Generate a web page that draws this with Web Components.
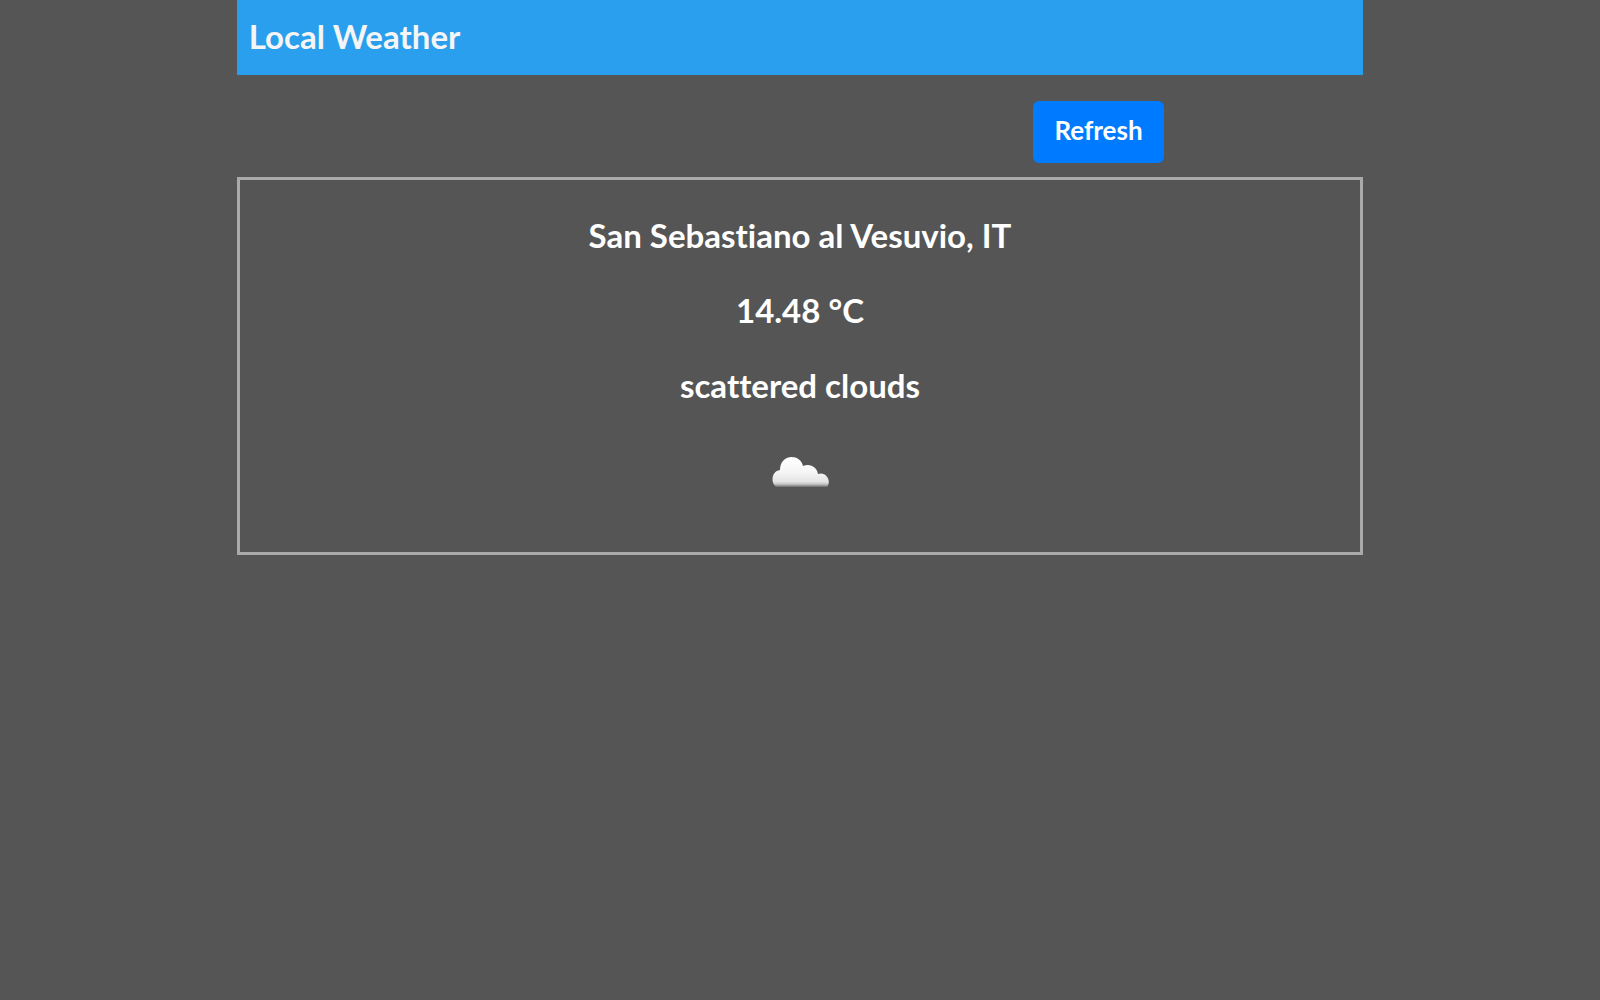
<!DOCTYPE html>
<html lang="en">
<head>
<meta charset="utf-8">
<meta name="viewport" content="width=device-width, initial-scale=1">
<title>Local Weather</title>
<style>
body { margin: 0; background: #555; color: #fff; font-family: "Trebuchet MS", Lato, sans-serif; font-size: 33px; font-weight: 700; line-height: 35px; font-variant-ligatures: none; }
</style>
</head>
<body>
<weather-app></weather-app>
<script>
const define = (name, html) => customElements.define(name, class extends HTMLElement {
  constructor() {
    super();
    this.attachShadow({ mode: "open" }).innerHTML = html;
  }
});

define("app-header", `
<style>
:host { display: block; background: #2a9fed; color: #f5f5f5; padding: 19px 12px 21px; }
h1 { margin: 0; font: inherit; font-variant-ligatures: none; }
</style>
<h1><slot></slot></h1>`);

define("refresh-button", `
<style>
:host { display: block; }
button { display: block; padding: 14px 21px 18px; border: 0; border-radius: 6px; background: #007bff; color: #fff; font: inherit; font-size: 26px; line-height: 30px; cursor: pointer; }
</style>
<button type="button"><slot></slot></button>`);

define("cloud-icon", `
<style>
:host { display: block; }
svg { display: block; width: 80px; height: 80px; }
</style>
<svg viewBox="0 0 80 80" role="img" aria-label="Cloud">
<defs>
<linearGradient id="shade" x1="0" y1="25" x2="0" y2="55" gradientUnits="userSpaceOnUse">
<stop offset="0" stop-color="#fff"/><stop offset=".45" stop-color="#f5f5f5"/><stop offset=".75" stop-color="#e4e4e4"/><stop offset=".84" stop-color="#c4c4c4"/><stop offset=".92" stop-color="#777"/><stop offset="1" stop-color="#555"/>
</linearGradient>
<filter id="soft"><feGaussianBlur stdDeviation=".7"/></filter>
</defs>
<path fill="url(#shade)" filter="url(#soft)" d="M16 53C10 48 12 37 20 36C20 20 40 19 43 32C50 29 57 33 58 40C66 37 72 47 67 53Z"/>
</svg>`);

define("weather-card", `
<style>
:host { display: flex; flex-direction: column; align-items: center; gap: 40px; padding: 38px 16px; border: 3px solid #aaa; text-align: center; }
p { margin: 0; }
cloud-icon { margin-top: -9px; }
</style>
<p><slot name="place"></slot></p>
<p><slot name="temperature"></slot></p>
<p><slot name="conditions"></slot></p>
<cloud-icon></cloud-icon>`);

define("weather-app", `
<style>
:host { display: block; width: 70.4%; margin: 0 auto; }
.actions { display: flex; justify-content: center; padding: 26px 0 14px; margin-left: 53%; }
</style>
<app-header>Local Weather</app-header>
<div class="actions"><refresh-button>Refresh</refresh-button></div>
<weather-card>
<span slot="place">San Sebastiano al Vesuvio, IT</span>
<span slot="temperature">14.48 °C</span>
<span slot="conditions">scattered clouds</span>
</weather-card>`);
</script>
</body>
</html>
